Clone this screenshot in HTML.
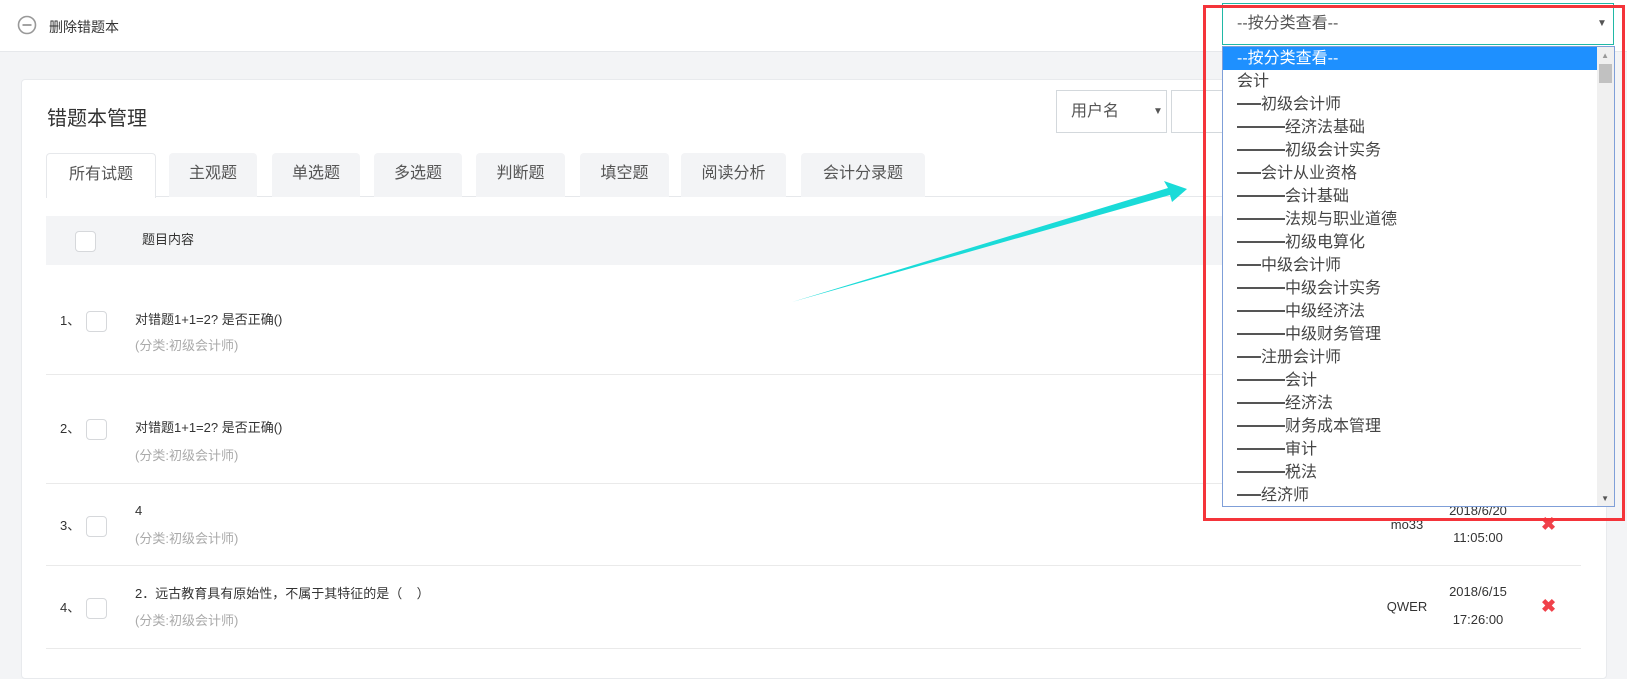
<!DOCTYPE html>
<html><head><meta charset="utf-8"><style>
*{margin:0;padding:0;box-sizing:border-box}
body{width:1627px;height:654px;overflow:hidden;background:#f3f4f6;font-family:"Liberation Sans","Noto Sans CJK SC",sans-serif;color:#333;position:relative}
.a{position:absolute}
.top{left:0;top:0;width:1627px;height:52px;background:#fff;border-bottom:1px solid #e6e8eb}
.card{left:21px;top:79px;width:1586px;height:600px;background:#fff;border:1px solid #e8eaed;border-radius:4px}
.tab{top:153px;height:44px;background:#f3f4f6;border-radius:4px 4px 0 0;font-size:16px;color:#555;text-align:center;line-height:42px}
.cb{width:21px;height:21px;border:1px solid #d6d8db;border-radius:4px;background:#fff}
.t{font-size:13px;color:#333;white-space:nowrap;line-height:16px}
.c{font-size:13px;color:#aaa;white-space:nowrap;line-height:16px}
.ln{height:1px;background:#eaeaea;left:46px;width:1535px}
.opt{height:23px;line-height:23px;padding-left:14px;font-size:16px;color:#444;white-space:nowrap}
.d{display:inline-block;height:2px;background:#555;vertical-align:middle;margin-top:-2px}
.x{color:#f0414a;font-size:18px;font-weight:bold}
</style></head><body>
<div class="a top"></div>
<svg class="a" style="left:17px;top:15px" width="20" height="20"><circle cx="10" cy="10" r="8.5" fill="none" stroke="#999" stroke-width="1.6"/><line x1="5.5" y1="10" x2="14.5" y2="10" stroke="#999" stroke-width="1.8"/></svg>
<div class="a" style="left:49px;top:17px;font-size:14px;color:#333">删除错题本</div>
<div class="a card"></div>
<div class="a" style="left:47px;top:102px;font-size:20px;color:#333">错题本管理</div>
<div class="a" style="left:1056px;top:90px;width:111px;height:43px;border:1px solid #d3d8dc;background:#fff;font-size:16px;color:#555;line-height:41px;padding-left:14px">用户名<span style="position:absolute;left:96px;font-size:10px;color:#555">▼</span></div>
<div class="a" style="left:1171px;top:90px;width:60px;height:43px;border:1px solid #d3d8dc;background:#fff"></div>
<div class="a" style="left:46px;top:196px;width:1535px;height:1px;background:#e6e8eb"></div>
<div class="a tab" style="left:46px;width:110px;background:#fff;border:1px solid #e6e8eb;border-bottom:none;height:45px">所有试题</div>
<div class="a tab" style="left:169px;width:88px">主观题</div>
<div class="a tab" style="left:272px;width:88px">单选题</div>
<div class="a tab" style="left:374px;width:88px">多选题</div>
<div class="a tab" style="left:476px;width:89px">判断题</div>
<div class="a tab" style="left:580px;width:89px">填空题</div>
<div class="a tab" style="left:681px;width:105px">阅读分析</div>
<div class="a tab" style="left:801px;width:124px">会计分录题</div>
<div class="a" style="left:46px;top:216px;width:1535px;height:49px;background:#f3f4f6"></div>
<div class="a cb" style="left:75px;top:231px"></div>
<div class="a t" style="left:142px;top:232px">题目内容</div>

<div class="a t" style="left:60px;top:313px">1、</div><div class="a cb" style="left:86px;top:311px"></div>
<div class="a t" style="left:135px;top:312px">对错题1+1=2? 是否正确()</div><div class="a c" style="left:135px;top:338px">(分类:初级会计师)</div>
<div class="a ln" style="top:374px"></div>
<div class="a t" style="left:60px;top:421px">2、</div><div class="a cb" style="left:86px;top:419px"></div>
<div class="a t" style="left:135px;top:420px">对错题1+1=2? 是否正确()</div><div class="a c" style="left:135px;top:448px">(分类:初级会计师)</div>
<div class="a ln" style="top:483px"></div>
<div class="a t" style="left:60px;top:518px">3、</div><div class="a cb" style="left:86px;top:516px"></div>
<div class="a t" style="left:135px;top:503px">4</div><div class="a c" style="left:135px;top:531px">(分类:初级会计师)</div>
<div class="a ln" style="top:565px"></div>
<div class="a t" style="left:60px;top:600px">4、</div><div class="a cb" style="left:86px;top:598px"></div>
<div class="a t" style="left:135px;top:586px">2．远古教育具有原始性，不属于其特征的是（&nbsp;&nbsp;&nbsp;&nbsp;）</div><div class="a c" style="left:135px;top:613px">(分类:初级会计师)</div>
<div class="a ln" style="top:648px"></div>

<div class="a t" style="left:1381px;top:517px;width:52px;text-align:center">mo33</div>
<div class="a t" style="left:1438px;top:503px;width:80px;text-align:center">2018/6/20</div>
<div class="a t" style="left:1438px;top:530px;width:80px;text-align:center">11:05:00</div>
<div class="a x" style="left:1541px;top:514px">✖</div>
<div class="a t" style="left:1381px;top:599px;width:52px;text-align:center">QWER</div>
<div class="a t" style="left:1438px;top:584px;width:80px;text-align:center">2018/6/15</div>
<div class="a t" style="left:1438px;top:612px;width:80px;text-align:center">17:26:00</div>
<div class="a x" style="left:1541px;top:596px">✖</div>

<svg class="a" style="left:0;top:0" width="1627" height="654"><polygon points="792,302 1168,188 1164,181 1187,189 1172,202 1170,195" fill="#1adbd8"/></svg>

<div class="a" style="left:1222px;top:3px;width:392px;height:42px;border:1px solid #20b8a6;background:#fff;font-size:16px;color:#555;line-height:40px;padding-left:14px">--按分类查看--<span style="position:absolute;left:374px;font-size:10px;color:#555">▼</span></div>
<div class="a" style="left:1222px;top:46px;width:393px;height:461px;border:1px solid #7f9fd8;background:#fff;overflow:hidden">
<div style="position:absolute;right:0;top:0;width:17px;height:459px;background:#f0f0f0"></div>
<div style="position:absolute;right:2px;top:17px;width:13px;height:19px;background:#c1c1c1"></div>
<div style="position:absolute;right:5px;top:4px;font-size:8px;color:#999">▲</div>
<div style="position:absolute;right:5px;bottom:3px;font-size:8px;color:#555">▼</div>
<div style="width:374px">
<div class="opt" style="background:#1e90ff;color:#fff">--按分类查看--</div>
<div class="opt">会计</div>
<div class="opt"><span class="d" style="width:24px"></span>初级会计师</div>
<div class="opt"><span class="d" style="width:48px"></span>经济法基础</div>
<div class="opt"><span class="d" style="width:48px"></span>初级会计实务</div>
<div class="opt"><span class="d" style="width:24px"></span>会计从业资格</div>
<div class="opt"><span class="d" style="width:48px"></span>会计基础</div>
<div class="opt"><span class="d" style="width:48px"></span>法规与职业道德</div>
<div class="opt"><span class="d" style="width:48px"></span>初级电算化</div>
<div class="opt"><span class="d" style="width:24px"></span>中级会计师</div>
<div class="opt"><span class="d" style="width:48px"></span>中级会计实务</div>
<div class="opt"><span class="d" style="width:48px"></span>中级经济法</div>
<div class="opt"><span class="d" style="width:48px"></span>中级财务管理</div>
<div class="opt"><span class="d" style="width:24px"></span>注册会计师</div>
<div class="opt"><span class="d" style="width:48px"></span>会计</div>
<div class="opt"><span class="d" style="width:48px"></span>经济法</div>
<div class="opt"><span class="d" style="width:48px"></span>财务成本管理</div>
<div class="opt"><span class="d" style="width:48px"></span>审计</div>
<div class="opt"><span class="d" style="width:48px"></span>税法</div>
<div class="opt"><span class="d" style="width:24px"></span>经济师</div>
</div></div>
<div class="a" style="left:1203px;top:5px;width:422px;height:516px;border:3px solid #f4343a"></div>
</body></html>
